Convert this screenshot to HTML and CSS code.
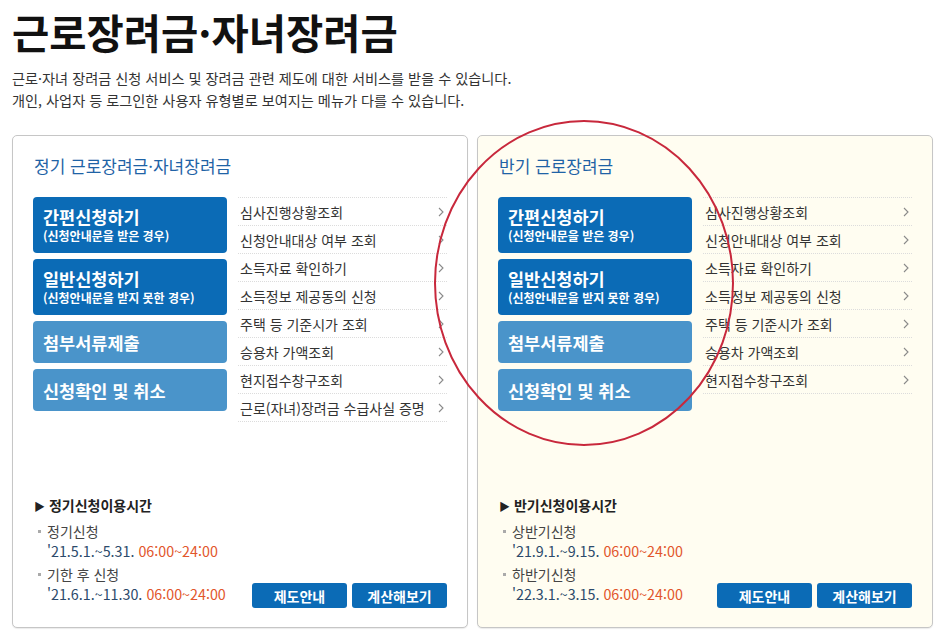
FILE: index.html
```html
<!DOCTYPE html>
<html lang="ko">
<head>
<meta charset="utf-8">
<title>근로장려금·자녀장려금</title>
<link rel="stylesheet" href="styles.css">
</head>
<body>
<div class="page">
  <h1 class="title">근로장려금·자녀장려금</h1>
  <p class="desc">근로·자녀 장려금 신청 서비스 및 장려금 관련 제도에 대한 서비스를 받을 수 있습니다.<br>개인, 사업자 등 로그인한 사용자 유형별로 보여지는 메뉴가 다를 수 있습니다.</p>

  <div class="cards">
    <section class="card">
      <h2 class="card-title">정기 근로장려금·자녀장려금</h2>
      <div class="card-body">
        <div class="actions">
          <a class="btn-big"><span class="main">간편신청하기</span><span class="sub">(신청안내문을 받은 경우)</span></a>
          <a class="btn-big"><span class="main">일반신청하기</span><span class="sub">(신청안내문을 받지 못한 경우)</span></a>
          <a class="btn-light">첨부서류제출</a>
          <a class="btn-light">신청확인 및 취소</a>
        </div>
        <ul class="links">
          <li><span>심사진행상황조회</span><svg class="chev" viewBox="0 0 6 10"><polyline points="1,1 5,5 1,9"/></svg></li>
          <li><span>신청안내대상 여부 조회</span><svg class="chev" viewBox="0 0 6 10"><polyline points="1,1 5,5 1,9"/></svg></li>
          <li><span>소득자료 확인하기</span><svg class="chev" viewBox="0 0 6 10"><polyline points="1,1 5,5 1,9"/></svg></li>
          <li><span>소득정보 제공동의 신청</span><svg class="chev" viewBox="0 0 6 10"><polyline points="1,1 5,5 1,9"/></svg></li>
          <li><span>주택 등 기준시가 조회</span><svg class="chev" viewBox="0 0 6 10"><polyline points="1,1 5,5 1,9"/></svg></li>
          <li><span>승용차 가액조회</span><svg class="chev" viewBox="0 0 6 10"><polyline points="1,1 5,5 1,9"/></svg></li>
          <li><span>현지접수창구조회</span><svg class="chev" viewBox="0 0 6 10"><polyline points="1,1 5,5 1,9"/></svg></li>
          <li><span>근로(자녀)장려금 수급사실 증명</span><svg class="chev" viewBox="0 0 6 10"><polyline points="1,1 5,5 1,9"/></svg></li>
        </ul>
      </div>
      <div class="foot">
        <div class="info">
          <h3 class="info-title"><span class="tri">▶</span> 정기신청이용시간</h3>
          <div class="item">
            <div class="label">정기신청</div>
            <div class="date">'21.5.1.~5.31. <span class="time">06:00~24:00</span></div>
          </div>
          <div class="item">
            <div class="label">기한 후 신청</div>
            <div class="date">'21.6.1.~11.30. <span class="time">06:00~24:00</span></div>
          </div>
        </div>
        <div class="mini-btns">
          <a class="mini">제도안내</a>
          <a class="mini">계산해보기</a>
        </div>
      </div>
    </section>

    <section class="card card-half">
      <h2 class="card-title">반기 근로장려금</h2>
      <div class="card-body">
        <div class="actions">
          <a class="btn-big"><span class="main">간편신청하기</span><span class="sub">(신청안내문을 받은 경우)</span></a>
          <a class="btn-big"><span class="main">일반신청하기</span><span class="sub">(신청안내문을 받지 못한 경우)</span></a>
          <a class="btn-light">첨부서류제출</a>
          <a class="btn-light">신청확인 및 취소</a>
        </div>
        <ul class="links">
          <li><span>심사진행상황조회</span><svg class="chev" viewBox="0 0 6 10"><polyline points="1,1 5,5 1,9"/></svg></li>
          <li><span>신청안내대상 여부 조회</span><svg class="chev" viewBox="0 0 6 10"><polyline points="1,1 5,5 1,9"/></svg></li>
          <li><span>소득자료 확인하기</span><svg class="chev" viewBox="0 0 6 10"><polyline points="1,1 5,5 1,9"/></svg></li>
          <li><span>소득정보 제공동의 신청</span><svg class="chev" viewBox="0 0 6 10"><polyline points="1,1 5,5 1,9"/></svg></li>
          <li><span>주택 등 기준시가 조회</span><svg class="chev" viewBox="0 0 6 10"><polyline points="1,1 5,5 1,9"/></svg></li>
          <li><span>승용차 가액조회</span><svg class="chev" viewBox="0 0 6 10"><polyline points="1,1 5,5 1,9"/></svg></li>
          <li><span>현지접수창구조회</span><svg class="chev" viewBox="0 0 6 10"><polyline points="1,1 5,5 1,9"/></svg></li>
        </ul>
      </div>
      <div class="foot">
        <div class="info">
          <h3 class="info-title"><span class="tri">▶</span> 반기신청이용시간</h3>
          <div class="item">
            <div class="label">상반기신청</div>
            <div class="date">'21.9.1.~9.15. <span class="time">06:00~24:00</span></div>
          </div>
          <div class="item">
            <div class="label">하반기신청</div>
            <div class="date">'22.3.1.~3.15. <span class="time">06:00~24:00</span></div>
          </div>
        </div>
        <div class="mini-btns">
          <a class="mini">제도안내</a>
          <a class="mini">계산해보기</a>
        </div>
      </div>
    </section>
  </div>

  <svg class="mark" width="941" height="635" viewBox="0 0 941 635">
    <ellipse cx="584" cy="283" rx="149" ry="162"/>
  </svg>
</div>
</body>
</html>
```

FILE: styles.css
```css
html, body {
  margin: 0;
  padding: 0;
  background: #ffffff;
}

body {
  font-family: "Noto Sans CJK KR", "Noto Sans", sans-serif;
  color: #222;
}

.page {
  position: relative;
  width: 941px;
  height: 635px;
  box-sizing: border-box;
  padding: 10px 0 0 12px;
  overflow: hidden;
}

.title {
  margin: 0;
  font-size: 40.5px;
  line-height: 44px;
  font-weight: 700;
  color: #111;
}

.desc {
  margin: 13px 0 0;
  font-size: 14.2px;
  line-height: 22px;
  color: #333;
}

.cards {
  display: flex;
  gap: 9px;
  margin-top: 24px;
}

.card {
  width: 456px;
  height: 493px;
  box-sizing: border-box;
  border: 1px solid #c6c6c6;
  border-radius: 5px;
  padding: 18px 20px 19px 20px;
  display: flex;
  flex-direction: column;
  background: #fff;
  box-shadow: 0 1px 1px rgba(0, 0, 0, 0.08);
}

.card-half {
  background: #fffdf1;
}

.card-title {
  margin: 0 0 19px 1px;
  font-size: 17px;
  line-height: 24px;
  font-weight: 400;
  color: #1f63a6;
}

.card-body {
  display: flex;
  gap: 11px;
}

.actions {
  width: 194px;
  display: flex;
  flex-direction: column;
  gap: 6px;
}

.btn-big {
  display: block;
  height: 56px;
  box-sizing: border-box;
  padding: 9px 10px;
  border-radius: 4px;
  background: #0b6bb6;
  color: #fff;
}

.btn-big .main {
  display: block;
  font-size: 17.5px;
  line-height: 22px;
  font-weight: 700;
}

.btn-big .sub {
  display: block;
  font-size: 12px;
  line-height: 16px;
  font-weight: 700;
}

.btn-light {
  display: flex;
  align-items: center;
  height: 42px;
  box-sizing: border-box;
  padding: 0 10px;
  border-radius: 4px;
  background: #4a94ca;
  color: #fff;
  font-size: 17.5px;
  font-weight: 700;
}

.links {
  list-style: none;
  margin: 0;
  padding: 0;
  width: 209px;
  border-top: 1px dotted #dcdcdc;
}

.links li {
  height: 28px;
  box-sizing: border-box;
  border-bottom: 1px dotted #dcdcdc;
  display: flex;
  align-items: center;
  justify-content: space-between;
  padding: 0 3px 0 2px;
  font-size: 14px;
  color: #333;
}

.chev {
  width: 6px;
  height: 10px;
  flex: none;
  fill: none;
  stroke: #8a8a8a;
  stroke-width: 1.1;
}

.foot {
  margin-top: auto;
  display: flex;
  justify-content: space-between;
  align-items: flex-end;
}

.info {
  padding: 0 0 5px 1px;
}

.info-title {
  margin: 0 0 6px;
  font-size: 14px;
  line-height: 20px;
  font-weight: 700;
  color: #222;
}

.tri {
  font-size: 11px;
}

.item + .item {
  margin-top: 5px;
}

.label {
  position: relative;
  padding-left: 13px;
  font-size: 14px;
  line-height: 19px;
  color: #444;
}

.label::before {
  content: "";
  position: absolute;
  left: 4px;
  top: 8px;
  width: 3px;
  height: 3px;
  background: #aaa;
}

.date {
  padding-left: 13px;
  font-size: 14.3px;
  line-height: 19px;
  color: #2c4a6b;
}

.time {
  color: #e2562c;
}

.mini-btns {
  display: flex;
  gap: 5px;
}

.mini {
  width: 95px;
  height: 25px;
  display: flex;
  align-items: center;
  justify-content: center;
  border-radius: 3px;
  background: #0b6bb6;
  color: #fff;
  font-size: 14px;
  font-weight: 700;
}

.mark {
  position: absolute;
  left: 0;
  top: 0;
  pointer-events: none;
}

.mark ellipse {
  fill: none;
  stroke: #c8283c;
  stroke-width: 2;
}
```
